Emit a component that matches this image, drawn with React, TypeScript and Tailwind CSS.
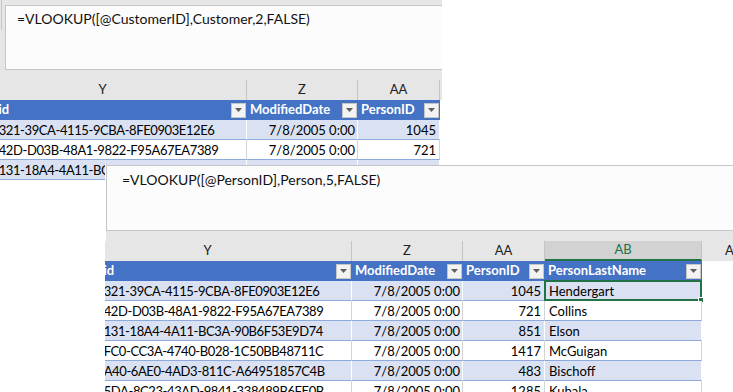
import clsx from "clsx";

type Col = {
  letter: string;
  width: string;
  head?: string;
  kind?: "guid" | "date" | "num" | "text";
  active?: boolean;
};

type Row = { guid: string; date: string; personId: string; lastName: string };

const rows: Row[] = [
  { guid: "70918321-39CA-4115-9CBA-8FE0903E12E6", date: "7/8/2005 0:00", personId: "1045", lastName: "Hendergart" },
  { guid: "1566942D-D03B-48A1-9822-F95A67EA7389", date: "7/8/2005 0:00", personId: "721", lastName: "Collins" },
  { guid: "38260131-18A4-4A11-BC3A-90B6F53E9D74", date: "7/8/2005 0:00", personId: "851", lastName: "Elson" },
  { guid: "61937FC0-CC3A-4740-B028-1C50BB48711C", date: "7/8/2005 0:00", personId: "1417", lastName: "McGuigan" },
  { guid: "24056A40-6AE0-4AD3-811C-A64951857C4B", date: "7/8/2005 0:00", personId: "483", lastName: "Bischoff" },
  { guid: "851375DA-8C23-43AD-9841-338489B6FE0B", date: "7/8/2005 0:00", personId: "1285", lastName: "Kubala" },
];

const firstCols: Col[] = [
  { letter: "Y", width: "w-[288px]", head: "rowguid", kind: "guid" },
  { letter: "Z", width: "w-[111px]", head: "ModifiedDate", kind: "date" },
  { letter: "AA", width: "w-[82px]", head: "PersonID", kind: "num" },
  { letter: "AB", width: "w-[64px]" },
];

const secondCols: Col[] = [
  { letter: "Y", width: "w-[288px]", head: "rowguid", kind: "guid" },
  { letter: "Z", width: "w-[111px]", head: "ModifiedDate", kind: "date" },
  { letter: "AA", width: "w-[82px]", head: "PersonID", kind: "num" },
  { letter: "AB", width: "w-[157px]", head: "PersonLastName", kind: "text", active: true },
  { letter: "AC", width: "w-[64px]" },
];

function FilterButton() {
  return (
    <span className="w-[15px] h-[15px] shrink-0 bg-[#f3f3f3] border border-[#c6c6c6] flex items-center justify-center">
      <svg width="7" height="4" viewBox="0 0 7 4">
        <path d="M0 0h7L3.5 4z" fill="#5f5f5f" />
      </svg>
    </span>
  );
}

function LetterRow({ cols }: { cols: Col[] }) {
  return (
    <div className="flex h-[20px] shrink-0 -ml-[41px] bg-[#e6e6e6]">
      {cols.map((c) => (
        <div
          key={c.letter}
          className={clsx(
            c.width,
            "shrink-0 flex items-center justify-center border-r border-[#c4c4c4] text-[13px]",
            c.active ? "bg-[#d2d2d2] text-[#217346] border-b-2 border-b-[#217346]" : "text-[#222]"
          )}
        >
          {c.letter}
        </div>
      ))}
    </div>
  );
}

function HeaderRow({ cols }: { cols: Col[] }) {
  return (
    <div className="flex h-[20px] shrink-0 -ml-[41px]">
      {cols.map((c) =>
        c.head ? (
          <div
            key={c.letter}
            className={clsx(
              c.width,
              "shrink-0 flex items-center justify-between gap-1 bg-[#4472c4] pl-[3px] pr-px text-white font-bold text-[13px] whitespace-nowrap overflow-hidden"
            )}
          >
            <span>{c.head}</span>
            <FilterButton />
          </div>
        ) : (
          <div key={c.letter} className={clsx(c.width, "shrink-0 bg-white")} />
        )
      )}
    </div>
  );
}

function DataRow({ cols, row, band, activeRow }: { cols: Col[]; row: Row; band: boolean; activeRow?: boolean }) {
  return (
    <div className="flex h-[20px] shrink-0 -ml-[41px]">
      {cols.map((c) => {
        if (!c.kind) return <div key={c.letter} className={clsx(c.width, "shrink-0 bg-white")} />;
        const value =
          c.kind === "guid" ? row.guid : c.kind === "date" ? row.date : c.kind === "num" ? row.personId : row.lastName;
        return (
          <div
            key={c.letter}
            className={clsx(
              c.width,
              "relative shrink-0 flex items-center pt-[2px] border-b border-b-[#8ea9db] border-r text-[13px] text-black whitespace-nowrap",
              band ? "bg-[#d9e1f2] border-r-white" : "bg-white border-r-[#d4d4d4]",
              c.kind === "date" && "justify-end pr-[2px]",
              c.kind === "num" && "justify-end pr-[3px]",
              c.kind === "guid" && "pl-[4px] overflow-hidden tracking-[-0.4px]",
              c.kind === "text" && "pl-[4px]"
            )}
          >
            {value}
            {activeRow && c.active && (
              <span className="absolute -left-px -top-px -right-px -bottom-px border-2 border-[#217346]">
                <span className="absolute -right-[4px] -bottom-[4px] w-[6px] h-[6px] bg-[#217346] border border-white" />
              </span>
            )}
          </div>
        );
      })}
    </div>
  );
}

export default function App() {
  return (
    <div className="relative w-[733px] h-[392px] overflow-hidden bg-white font-['Lato',sans-serif]">
      {/* First sheet: PersonID lookup */}
      <div className="w-[442px] h-[181px] overflow-hidden flex flex-col bg-white">
        <div className="flex h-[80px] shrink-0 bg-[#e6e6e6] pt-[5px]">
          <div className="w-[5px] shrink-0 -mt-[5px]">
            <div className="ml-px w-px h-[30px] bg-[#c6c6c6]" />
          </div>
          <div className="flex-1 h-[65px] bg-[#fcfcfc] border border-r-0 border-[#c6c6c6] pl-[11px] pt-[3px] leading-[20px] text-[14px] text-[#111]">
            =VLOOKUP([@CustomerID],Customer,2,FALSE)
          </div>
        </div>
        <LetterRow cols={firstCols} />
        <HeaderRow cols={firstCols} />
        {rows.slice(0, 3).map((r, i) => (
          <DataRow key={r.guid} cols={firstCols} row={r} band={i % 2 === 0} />
        ))}
      </div>

      {/* Second sheet laid over the first one */}
      <div className="absolute left-[105px] top-[165px] w-[628px] h-[227px] overflow-hidden flex flex-col bg-white">
        <div className="flex h-[76px] shrink-0 bg-[#e6e6e6]">
          <div className="w-px shrink-0 bg-white" />
          <div className="flex-1 h-[66px] bg-[#fcfcfc] border border-r-0 border-[#c6c6c6] pl-[15px] pt-[4px] leading-[20px] text-[14px] text-[#111]">
            =VLOOKUP([@PersonID],Person,5,FALSE)
          </div>
        </div>
        <LetterRow cols={secondCols} />
        <HeaderRow cols={secondCols} />
        {rows.map((r, i) => (
          <DataRow key={r.guid} cols={secondCols} row={r} band={i % 2 === 0} activeRow={i === 0} />
        ))}
      </div>
    </div>
  );
}
